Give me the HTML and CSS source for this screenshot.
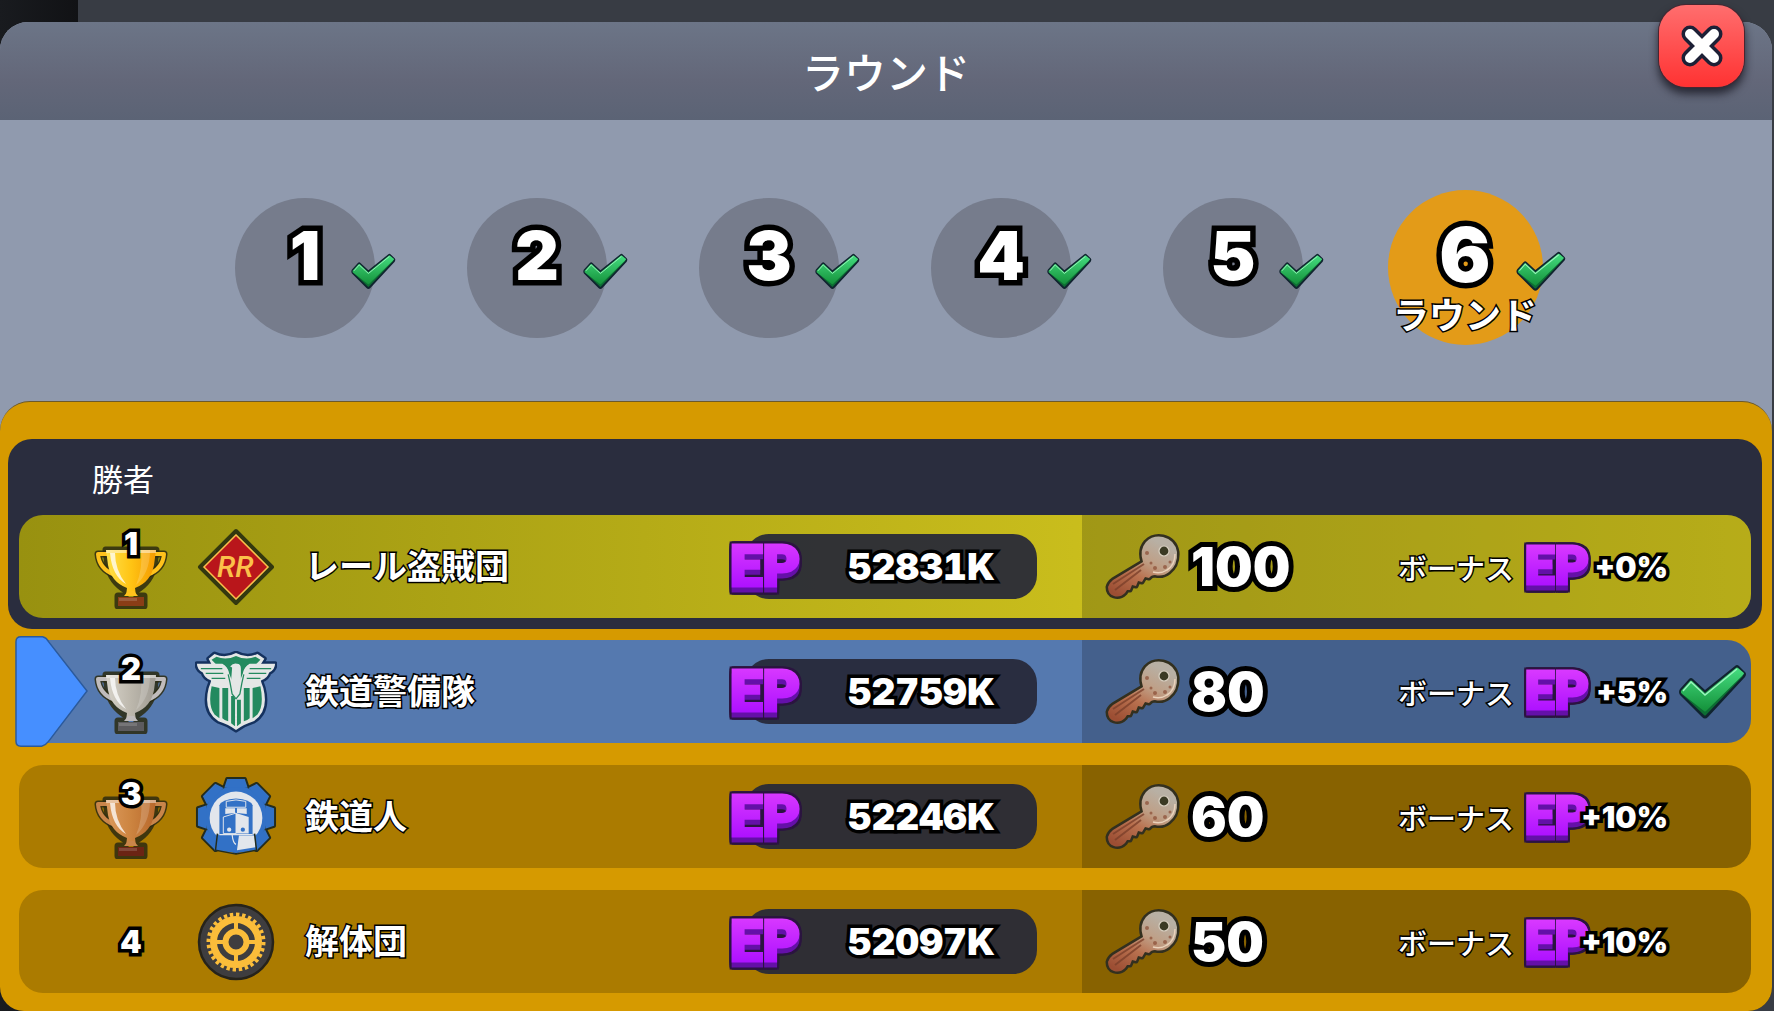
FILE: index.html
```html
<!DOCTYPE html>
<html lang="ja">
<head>
<meta charset="utf-8">
<meta name="viewport" content="width=device-width, initial-scale=1">
<title>ラウンド</title>
<link rel="stylesheet" href="styles.css">
</head>
<body>
<svg class="sprite" width="0" height="0" aria-hidden="true">
  <defs>
    <linearGradient id="g-check" x1="0" y1="0" x2="0" y2="1">
      <stop offset="0" stop-color="#45dd80"/><stop offset="1" stop-color="#14913a"/>
    </linearGradient>
    <linearGradient id="g-ep" x1="0" y1="0" x2="0" y2="1">
      <stop offset="0.1" stop-color="#dc3cff"/><stop offset="0.9" stop-color="#a80cff"/>
    </linearGradient>
    <linearGradient id="g-key" x1="0.8" y1="0" x2="0.2" y2="1">
      <stop offset="0.1" stop-color="#b8b0a4"/><stop offset="0.4" stop-color="#bf9f86"/><stop offset="0.65" stop-color="#b9714f"/><stop offset="1" stop-color="#9c4e33"/>
    </linearGradient>
    <linearGradient id="g-gold" x1="0" y1="0" x2="1" y2="0">
      <stop offset="0" stop-color="#ffe14a"/><stop offset="0.5" stop-color="#ffc414"/><stop offset="1" stop-color="#f59a00"/>
    </linearGradient>
    <linearGradient id="g-silver" x1="0" y1="0" x2="1" y2="0">
      <stop offset="0" stop-color="#d6d2c9"/><stop offset="0.5" stop-color="#bcb7ac"/><stop offset="1" stop-color="#a09c94"/>
    </linearGradient>
    <linearGradient id="g-bronze" x1="0" y1="0" x2="1" y2="0">
      <stop offset="0" stop-color="#dc9a5c"/><stop offset="0.5" stop-color="#cc8440"/><stop offset="1" stop-color="#b8682c"/>
    </linearGradient>
  </defs>

  <symbol id="check" viewBox="0 0 70 56">
    <path d="M3 25 L12 15 Q14 13 16 15 L28 26 L58 2 Q60 0 62 2 L68 8 Q70 10 68 13 L31 53 Q28 56 25 53 L3 31 Q1 28 3 25Z" fill="#10242f"/>
    <path d="M5 30 L13 21 L28 36 L60 6 L66 12 L29 51 Q28 52 27 51Z" fill="#0d6d33"/>
    <path d="M4 27 L13 17 Q14 16 15 17 L28 29 L59 4 Q60 3 61 4 L67 9 Q67 10 66 11 L29 47 Q28 48 27 47 L4 29Z" fill="url(#g-check)"/>
    <path d="M6 27 L14 18 L28 31 L60 5" fill="none" stroke="#9af5bd" stroke-width="1.4"/>
  </symbol>

  <symbol id="cup" viewBox="0 0 74 64">
    <g stroke="#2b2a10" stroke-opacity=".85" stroke-width="7" stroke-linejoin="round" fill="none">
      <path d="M12 5H62L60 20Q57 37 41 46L43 51H50V61H24V51H31L33 46Q17 37 14 20Z"/>
      <path d="M13 9H4Q5 24 21 30M61 9H70Q69 24 53 30"/>
    </g>
    <path d="M13 9H4Q5 24 21 30M61 9H70Q69 24 53 30" fill="none" stroke="currentColor" stroke-width="4" stroke-linejoin="round"/>
    <path d="M12 5H62L60 20Q57 37 41 43L42 51H32L33 43Q17 37 14 20Z" fill="var(--cup)"/>
    <path d="M47 5H56Q56 28 42 40Q49 24 47 5Z" fill="#fff" opacity=".18"/>
    <path d="M16 8H21Q21 25 32 39Q18 31 16 8Z" fill="#fff" opacity=".75"/>
    <path d="M12 5H62V8H12Z" fill="#fff" opacity=".45"/>
    <path d="M30 51L34 46H40L44 51Z" fill="currentColor"/>
    <path d="M24 52H50V61H24Z" fill="var(--base)"/>
    <path d="M25 53H43V56H25Z" fill="#fff" opacity=".16"/>
  </symbol>

  <symbol id="key" viewBox="0 0 78 66">
    <path d="M40 28 Q36 16 43 8 Q50 1 60 3 Q72 6 74 18 Q75 31 66 38 Q60 43 52 41 Q48 41 46 44 L42 43 L39 48 L35 47 L33 52 L29 51 L27 56 L24 56 L22 59 Q17 64 11 62 Q5 60 5 53 Q6 49 10 46 Z" fill="#33301f" stroke="#33301f" stroke-width="5" stroke-linejoin="round"/>
    <path d="M40 28 Q36 16 43 8 Q50 1 60 3 Q72 6 74 18 Q75 31 66 38 Q60 43 52 41 Q48 41 46 44 L42 43 L39 48 L35 47 L33 52 L29 51 L27 56 L24 56 L22 59 Q17 64 11 62 Q5 60 5 53 Q6 49 10 46 Z" fill="url(#g-key)"/>
    <path d="M72 20 Q72 31 64 36 Q58 40 50 38" fill="none" stroke="#ead2bb" stroke-width="1.5"/>
    <path d="M41 30 L10 50 M38 36 L12 56" stroke="#7c402b" stroke-width="2" fill="none" opacity=".8"/>
    <g fill="#8b4d35" opacity=".7"><circle cx="52" cy="34" r="2"/><circle cx="62" cy="33" r="2"/><circle cx="44" cy="19" r="2"/><circle cx="48" cy="29" r="1.5"/><circle cx="67" cy="28" r="1.5"/></g>
    <ellipse cx="61" cy="17" rx="5" ry="5" fill="#3b3a24" stroke="#d9d0c2" stroke-width="1.2"/>
  </symbol>

  <symbol id="gear-shape" viewBox="-42 -42 84 84">
    <circle r="32"/>
    <path id="tooth" d="M-9 -39 H9 L12 -30 H-12Z"/>
    <use href="#tooth" transform="rotate(45)"/><use href="#tooth" transform="rotate(90)"/>
    <use href="#tooth" transform="rotate(135)"/><use href="#tooth" transform="rotate(-45)"/>
    <use href="#tooth" transform="rotate(-90)"/><use href="#tooth" transform="rotate(-135)"/>
    <path d="M-22 22 L0 36 L22 22Z"/>
  </symbol>
</svg>

<main class="dialog">
  <header class="dialog-head">
    <h1>ラウンド</h1>
    <button class="close" type="button" aria-label="閉じる">
      <svg viewBox="0 0 44 44" width="44" height="44" aria-hidden="true">
        <path d="M10 10L34 34M34 10L10 34" stroke="#1d2036" stroke-width="17" stroke-linecap="round"/>
        <path d="M10 10L34 34M34 10L10 34" stroke="#fff" stroke-width="10" stroke-linecap="round"/>
      </svg>
    </button>
  </header>

  <nav class="rounds" aria-label="ラウンド">
    <ol>
      <li><button type="button" class="round"><span class="num">1</span><svg class="tick"><use href="#check"/></svg></button></li>
      <li><button type="button" class="round"><span class="num">2</span><svg class="tick"><use href="#check"/></svg></button></li>
      <li><button type="button" class="round"><span class="num">3</span><svg class="tick"><use href="#check"/></svg></button></li>
      <li><button type="button" class="round"><span class="num">4</span><svg class="tick"><use href="#check"/></svg></button></li>
      <li><button type="button" class="round"><span class="num">5</span><svg class="tick"><use href="#check"/></svg></button></li>
      <li><button type="button" class="round current" aria-current="step"><span class="num">6</span><span class="caption">ラウンド</span><svg class="tick"><use href="#check"/></svg></button></li>
    </ol>
  </nav>

  <section class="board">
    <table>
      <tbody class="winner">
        <tr class="heading"><th scope="rowgroup">勝者</th></tr>
        <tr class="row first">
          <td class="rank"><span class="medal gold"><svg><use href="#cup"/></svg><b>1</b></span></td>
          <td class="emblem">
            <svg viewBox="0 0 80 80" width="80" height="80" aria-hidden="true">
              <path d="M40 4L76 40L40 76L4 40Z" fill="#fbc04a" stroke="#33380f" stroke-width="4" stroke-linejoin="round"/>
              <path d="M40 9L71 40L40 71L9 40Z" fill="#b9161b"/>
              <text class="monogram" x="21" y="50">RR</text>
            </svg>
          </td>
          <td class="name">レール盗賊団</td>
          <td class="score"><span class="pill"><svg class="ep" viewBox="0 0 74 58"><text x="3" y="48">EP</text></svg><b>52831K</b></span></td>
          <td class="keys"><svg class="key"><use href="#key"/></svg><b>100</b></td>
          <td class="bonus"><span class="label">ボーナス</span><svg class="ep" viewBox="0 0 74 58"><text x="3" y="48">EP</text></svg><b>+0%</b></td>
        </tr>
      </tbody>
      <tbody class="others">
        <tr class="row own">
          <td class="rank">
            <svg class="marker" viewBox="0 0 75 113" aria-hidden="true"><path d="M6 1H28Q32 2 34 6L73 56L34 107Q31 111 27 112H6Q1 112 1 107V6Q1 1 6 1Z" fill="#468fff" stroke="#2b5a9c" stroke-width="1.5"/></svg>
            <span class="medal silver"><svg><use href="#cup"/></svg><b>2</b></span></td>
          <td class="emblem">
            <svg viewBox="0 0 84 84" width="82" height="82" aria-hidden="true">
              <g stroke="#15325f" stroke-width="5" stroke-linejoin="round" fill="#e4e7e6">
                <path d="M14 8L20 3Q31 8 42 2Q53 8 64 3L71 8L66 16Q64 22 70 38Q76 62 60 72Q50 75 42 81Q34 75 24 72Q8 62 14 38Q20 22 18 16Z"/>
                <path d="M2 13H28Q33 16 34 22L42 50L50 22Q51 16 56 13H82Q82 19 76 22Q74 28 68 30Q62 38 50 38L42 50L34 38Q22 38 16 30Q10 28 8 22Q2 19 2 13Z"/>
              </g>
              <path d="M14 8L20 3Q31 8 42 2Q53 8 64 3L71 8L66 16Q64 22 70 38Q76 62 60 72Q50 75 42 81Q34 75 24 72Q8 62 14 38Q20 22 18 16Z" fill="#e4e7e6"/>
              <path d="M17 9L22 6Q32 10 42 5Q52 10 62 6L67 9L61 15H54Q50 17 49 23L45 33H39L35 23Q34 17 30 15H23Z" fill="#238a5f"/>
              <path d="M17 36Q13 56 20 65L25 69V38ZM28 38H34V72Q30 71 28 69ZM37 46H41V77L37 74ZM43 50H47V74L43 77ZM50 38H56V69Q54 71 50 72ZM67 36Q71 56 64 65L59 69V38Z" fill="#238a5f"/>
              <path d="M2 13H28Q34 16 34 24L37 30Q38 18 38 17L36 16Q39 12 43 13Q47 13 47 18V30L50 24Q50 16 56 13H82Q82 19 76 22Q74 28 68 30Q62 38 50 36L47 42L42 50L37 42L34 36Q22 38 16 30Q10 28 8 22Q2 19 2 13Z" fill="#e4e7e6"/>
              <path d="M6 18H28M11 23H29M17 28H31M78 18H56M73 23H55M67 28H53M34 24L36 33L38 44L42 49L46 44L48 33L50 24" fill="none" stroke="#238a5f" stroke-width="1.3"/>
            </svg>
          </td>
          <td class="name">鉄道警備隊</td>
          <td class="score"><span class="pill"><svg class="ep" viewBox="0 0 74 58"><text x="3" y="48">EP</text></svg><b>52759K</b></span></td>
          <td class="keys"><svg class="key"><use href="#key"/></svg><b>80</b></td>
          <td class="bonus"><span class="label">ボーナス</span><svg class="ep" viewBox="0 0 74 58"><text x="3" y="48">EP</text></svg><b>+5%</b><svg class="done"><use href="#check"/></svg></td>
        </tr>
        <tr class="row">
          <td class="rank"><span class="medal bronze"><svg><use href="#cup"/></svg><b>3</b></span></td>
          <td class="emblem">
            <svg viewBox="-42 -42 84 84" width="82" height="82" aria-hidden="true">
              <use href="#gear-shape" x="-42" y="-42" width="84" height="84" fill="#242c1c" stroke="#242c1c" stroke-width="4" stroke-linejoin="round"/>
              <use href="#gear-shape" x="-42" y="-42" width="84" height="84" fill="#3271c6"/>
              <circle r="27" cy="1" fill="#e2e6ec"/>
              <path d="M-17 18V-12Q-15 -18 0 -19Q15 -18 17 -12V18Z" fill="#3271c6"/>
              <path d="M-10 -16Q0 -19 10 -16V-10H-10Z" fill="#3271c6" stroke="#e2e6ec" stroke-width="1"/>
              <path d="M-11 -9H-1V-4L-11 -3ZM1 -9H11V-3L1 -4Z" fill="#e2e6ec"/>
              <path d="M-13 0L0 -4V17H-13Z" fill="#3271c6" stroke="#e2e6ec" stroke-width="1"/>
              <path d="M13 0L0 -4V17H13Z" fill="#e2e6ec"/>
              <circle cx="-7" cy="13" r="2.2" fill="#e2e6ec"/><circle cx="7" cy="13" r="2.2" fill="#3271c6"/>
              <path d="M-20 18H20L22 34L0 37L-22 34Z" fill="#3271c6"/>
              <path d="M-17 18H17M-4 18Q-3 27 0 28" fill="none" stroke="#e2e6ec" stroke-width="1.2"/>
              <path d="M3 19H19L20 31L1 34Z" fill="#e2e6ec"/>
              <path d="M-19 17L-21 34L0 38L21 34L19 17" fill="none" stroke="#242c1c" stroke-width="1.5"/>
            </svg>
          </td>
          <td class="name">鉄道人</td>
          <td class="score"><span class="pill"><svg class="ep" viewBox="0 0 74 58"><text x="3" y="48">EP</text></svg><b>52246K</b></span></td>
          <td class="keys"><svg class="key"><use href="#key"/></svg><b>60</b></td>
          <td class="bonus"><span class="label">ボーナス</span><svg class="ep" viewBox="0 0 74 58"><text x="3" y="48">EP</text></svg><b>+10%</b></td>
        </tr>
        <tr class="row">
          <td class="rank"><span class="medal plain"><b>4</b></span></td>
          <td class="emblem">
            <svg viewBox="-40 -40 80 80" width="80" height="80" aria-hidden="true">
              <circle r="37" fill="#3e3d3f" stroke="#26231a" stroke-width="2.5"/>
              <g fill="none" stroke="#fbbd3a">
                <circle r="27.5" stroke-width="4" stroke-dasharray="3.4 2.77" pathLength="172.8"/>
                <circle r="22.5" stroke-width="7"/>
                <circle r="10.5" stroke-width="6"/>
                <path d="M0 -22V-12M0 22V12M-22 0H-12M22 0H12" stroke-width="4"/>
              </g>
            </svg>
          </td>
          <td class="name">解体団</td>
          <td class="score"><span class="pill"><svg class="ep" viewBox="0 0 74 58"><text x="3" y="48">EP</text></svg><b>52097K</b></span></td>
          <td class="keys"><svg class="key"><use href="#key"/></svg><b>50</b></td>
          <td class="bonus"><span class="label">ボーナス</span><svg class="ep" viewBox="0 0 74 58"><text x="3" y="48">EP</text></svg><b>+10%</b></td>
        </tr>
      </tbody>
    </table>
  </section>
</main>
</body>
</html>
```
FILE: styles.css
```css
* { box-sizing: border-box; }

body {
  margin: 0;
  padding: 22px 2px 0 0;
  min-height: 100vh;
  background: linear-gradient(90deg, #191b1f 0, #111215 78px, #383c44 78px);
  color: #fff;
  font-family: Inter, "Noto Sans CJK JP", sans-serif;
}

button {
  border: 0;
  padding: 0;
  color: inherit;
  font: inherit;
  cursor: pointer;
}

.sprite { position: absolute; }

.dialog {
  border-radius: 28px 28px 24px 24px;
  background: linear-gradient(#909aae 0 60%, #1a1b22 60%);
}

.dialog-head {
  position: relative;
  display: flex;
  align-items: center;
  justify-content: center;
  height: 98px;
  padding-top: 6px;
  border-radius: 28px 28px 0 0;
  background: linear-gradient(#6c7587, #636779 60%, #5b6375);
}

.dialog-head h1 {
  margin: 0;
  font-size: 42px;
  line-height: 48px;
  font-weight: 500;
}

.close {
  position: absolute;
  right: 28px;
  top: -17px;
  display: grid;
  place-items: center;
  width: 85px;
  height: 82px;
  border-radius: 27px;
  background: linear-gradient(#ff6e6e, #ff3232);
  box-shadow: 0 0 0 1px #4a2530, 0 6px 8px 1px rgba(20, 20, 30, .75);
}

.rounds { padding: 70px 2px 56px 0; }

.rounds ol {
  display: grid;
  grid-template-columns: repeat(6, minmax(0, 232px));
  justify-content: center;
  margin: 0;
  padding: 0;
  list-style: none;
}

.rounds li {
  display: grid;
  place-items: center;
  height: 155px;
}

.round {
  position: relative;
  display: grid;
  place-items: center;
  width: 140px;
  height: 140px;
  padding-bottom: 26px;
  border-radius: 50%;
  background: #767c8c;
}

.round.current {
  width: 155px;
  height: 155px;
  padding-bottom: 28px;
  background: #e39b18;
}

.num {
  font-size: 68px;
  line-height: 72px;
  font-weight: 900;
  -webkit-text-stroke: 11px #000;
  stroke-linejoin: round;
  paint-order: stroke fill;
}

.current .num { font-size: 76px; }

.caption {
  position: absolute;
  left: 50%;
  top: 106px;
  transform: translateX(-50%);
  font-size: 36px;
  line-height: 40px;
  font-weight: 600;
  white-space: nowrap;
  -webkit-text-stroke: 3px #000;
  paint-order: stroke fill;
}

.tick {
  position: absolute;
  left: 115px;
  top: 55px;
  width: 46px;
  height: 37px;
}

.current .tick {
  left: 127px;
  top: 61px;
  width: 51px;
  height: 41px;
}

.board {
  padding: 37px 10px 18px 8px;
  border-top: 1px solid #6d5a2a;
  border-radius: 30px 30px 24px 24px;
  background: #d69a00;
}

table, tbody { display: block; }
th, td { padding: 0; }

.winner {
  padding: 0 11px 11px;
  border-radius: 24px;
  background: #2a2d3e;
}

.heading {
  display: flex;
  align-items: center;
  height: 76px;
  padding: 6px 0 0 73px;
}

.heading th {
  font-size: 31px;
  line-height: 36px;
  font-weight: 400;
}

.others {
  display: grid;
  gap: 22px;
  padding: 11px 11px 0;
}

.row {
  position: relative;
  display: grid;
  grid-template-columns: 164px 106px minmax(0, 440fr) 353px minmax(0, 297fr) 372px;
  height: 103px;
  border-radius: 24px;
  background: #ab7b00;
}

.row.first { background: linear-gradient(90deg, #989110, #c9bd1c 61%, #e5d820); }
.row.own { background: #5579af; }

.row td {
  display: flex;
  align-items: center;
}

.row b {
  color: #fff;
  font-weight: 900;
  -webkit-text-stroke: 7px #000;
  stroke-linejoin: round;
  paint-order: stroke fill;
}

.marker {
  position: absolute;
  left: -4px;
  top: -5px;
  width: 74px;
  height: 113px;
}

.row .rank { justify-content: flex-end; padding-right: 15px; }

.medal {
  position: relative;
  display: grid;
  justify-items: center;
  align-items: end;
  width: 74px;
  height: 85px;
}

.medal svg {
  width: 74px;
  height: 64px;
}

.medal b {
  position: absolute;
  top: 2px;
  font-size: 31px;
  line-height: 36px;
}

.medal.plain { align-items: center; }
.medal.plain b { position: static; }

.gold { color: #ffc21c; --cup: url(#g-gold); --base: #8a3d16; }
.silver { color: #c0bcbc; --cup: url(#g-silver); --base: #5c5b5e; }
.bronze { color: #c9854a; --cup: url(#g-bronze); --base: #6b2414; }

.row .emblem { justify-content: center; }

.monogram {
  font: italic 500 30px Roboto, sans-serif;
  fill: #fbc04a;
  stroke: #b9161b;
  stroke-width: 1px;
  paint-order: stroke fill;
}

.row .name {
  padding-left: 16px;
  font-size: 34px;
  line-height: 40px;
  font-weight: 600;
  white-space: nowrap;
  -webkit-text-stroke: 3px #000;
  paint-order: stroke fill;
}

.row .score { padding-right: 45px; }

.pill {
  display: flex;
  align-items: center;
  width: 100%;
  height: 65px;
  margin-left: 16px;
  padding-right: 42px;
  border-radius: 24px;
  background: rgba(38, 40, 56, .93);
  font-size: 37px;
  font-variant-numeric: tabular-nums;
}

.pill .ep { margin: 0 auto 0 -18px; }

.ep {
  flex: none;
  width: 74px;
  height: 58px;
  overflow: visible;
  filter: drop-shadow(0 5px 0 #6410a8) drop-shadow(2px 0 0 #2b1440) drop-shadow(-2px 0 0 #2b1440) drop-shadow(0 2px 0 #2b1440) drop-shadow(0 -2px 0 #2b1440);
}

.ep text {
  font: 900 58px Roboto, sans-serif;
  fill: url(#g-ep);
  stroke: url(#g-ep);
  stroke-width: 3px;
}

.row .keys {
  gap: 10px;
  padding-left: 21px;
  background: rgba(0, 0, 0, .2);
  font-size: 53px;
}

.keys b { -webkit-text-stroke-width: 10px; }

.key {
  flex: none;
  width: 78px;
  height: 66px;
}

.row .bonus {
  display: grid;
  grid-template-columns: 124px 68px 98px 80px;
  padding-left: 19px;
  border-radius: 0 24px 24px 0;
  background: rgba(0, 0, 0, .2);
  font-size: 30px;
}

.label {
  font-size: 29px;
  font-weight: 500;
  white-space: nowrap;
  -webkit-text-stroke: 3px #000;
  paint-order: stroke fill;
}

.bonus .ep {
  width: 68px;
  height: 54px;
}

.bonus b {
  position: relative;
  justify-self: end;
  margin-right: 20px;
}

.done {
  width: 70px;
  height: 56px;
  margin-left: -11px;
}
```
